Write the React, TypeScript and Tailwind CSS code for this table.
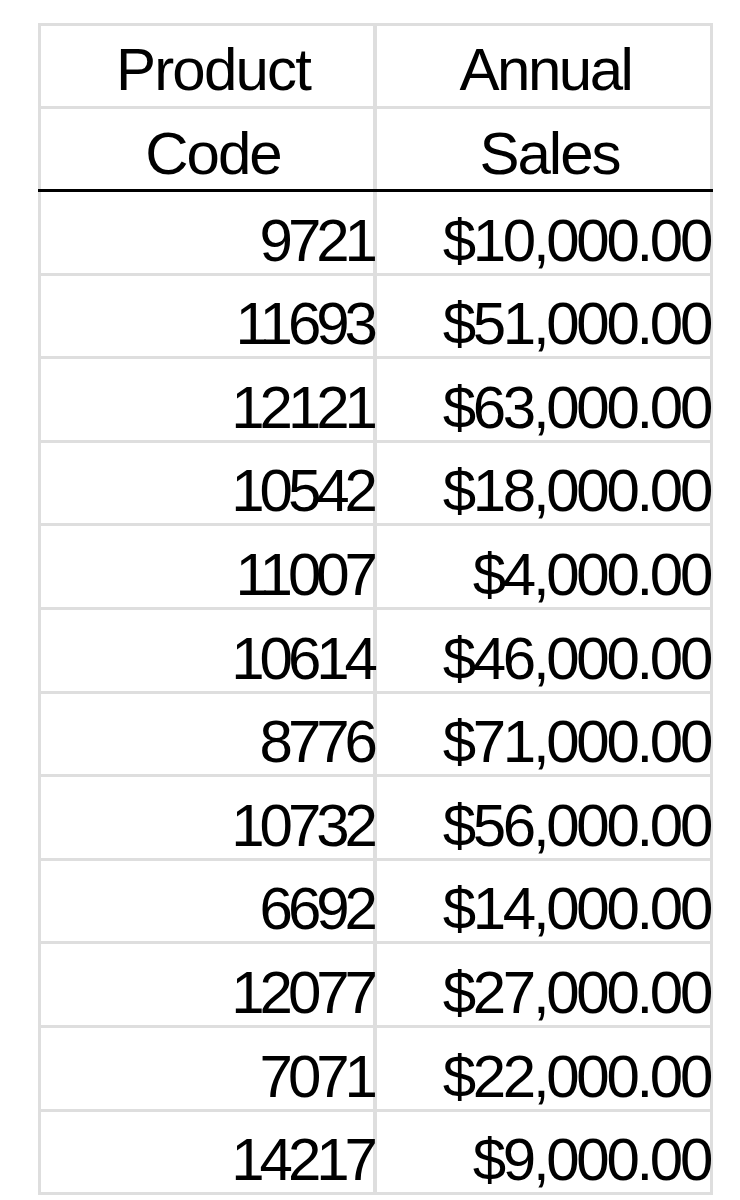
import React from "react";

const rows: [string, string][] = [
  ["9721", "$10,000.00"],
  ["11693", "$51,000.00"],
  ["12121", "$63,000.00"],
  ["10542", "$18,000.00"],
  ["11007", "$4,000.00"],
  ["10614", "$46,000.00"],
  ["8776", "$71,000.00"],
  ["10732", "$56,000.00"],
  ["6692", "$14,000.00"],
  ["12077", "$27,000.00"],
  ["7071", "$22,000.00"],
  ["14217", "$9,000.00"],
];

export default function App() {
  return (
    <div
      className="min-h-[1200px] w-[740px] bg-white pl-[38px] pt-[23px] text-[60px] leading-none text-black"
      style={{ fontFamily: '"Liberation Sans", Arial, sans-serif' }}
    >
      <div className="w-[675px] border-l-[3px] border-t-[3px] border-[#dedede]">
        <div className="flex h-[83px] border-b-[3px] border-[#dedede]">
          <div className="flex w-[336px] items-end justify-center border-r-[4px] border-[#dedede] pb-[6px] pl-[12px] tracking-[-1.8px]">
            Product
          </div>
          <div className="flex flex-1 items-end justify-center border-r-[3px] border-[#dedede] pb-[6px] pl-[4px] tracking-[-2.5px]">
            Annual
          </div>
        </div>
        <div className="-ml-[3px] flex h-[83px] border-b-[3px] border-black pl-[3px]">
          <div className="flex w-[336px] items-end justify-center border-r-[4px] border-[#dedede] pb-[5px] pl-[12px] tracking-[-2px]">
            Code
          </div>
          <div className="flex flex-1 items-end justify-center border-r-[3px] border-[#dedede] pb-[5px] pl-[12px] tracking-[-2px]">
            Sales
          </div>
        </div>
        {rows.map(([code, sales]) => (
          <div key={code} className="flex h-[83.6px] border-b-[3px] border-[#dedede]">
            <div className="flex w-[336px] items-end justify-end border-r-[4px] border-[#dedede] pb-[2px] pr-0 tracking-[-5px]">
              {code}
            </div>
            <div className="flex flex-1 items-end justify-end border-r-[3px] border-[#dedede] pb-[2px] pr-0 tracking-[-3.3px]">
              {sales}
            </div>
          </div>
        ))}
      </div>
    </div>
  );
}
